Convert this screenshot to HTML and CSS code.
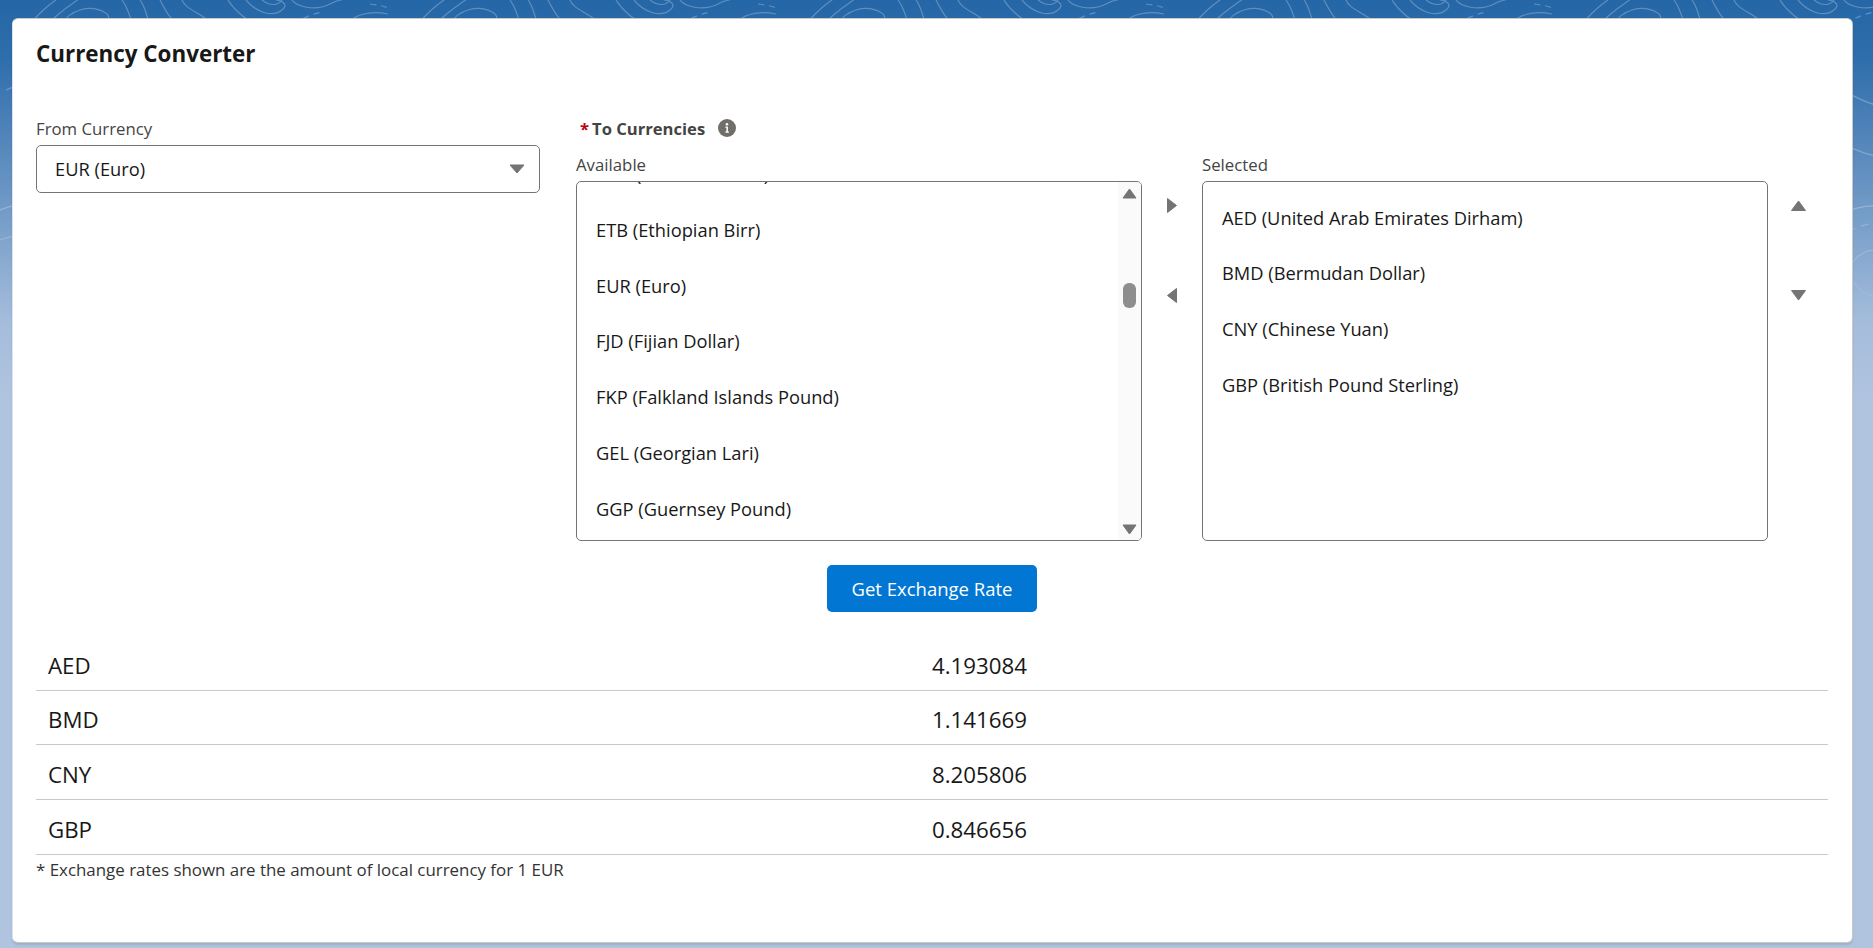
FILE: index.html
```html
<!DOCTYPE html>
<html lang="en">
<head>
  <meta charset="UTF-8">
  <meta name="viewport" content="width=device-width, initial-scale=1.0">
  <title>Currency Converter</title>
  <link rel="stylesheet" href="styles.css">
</head>
<body>
  <svg class="topo" width="1873" height="340" aria-hidden="true">
    <defs>
      <pattern id="topo-tile" width="388" height="340" patternUnits="userSpaceOnUse">
        <g fill="none" stroke="#fff" stroke-width="1.2">
          <path d="M30 24C50 0 70-10 95-20M48 24C66 4 84 0 100-20"/>
          <path d="M62 24C70 10 90 4 104 12C112 16 108 22 104 24"/>
          <path d="M122 0C128 8 130 16 132 24M140 0C146 8 146 16 150 24M160 0C164 8 168 16 176 24"/>
          <path d="M182 0C186 10 200 12 212 24"/>
          <path d="M228 0C234 10 246 20 256 24M246 0C256 12 272 18 282 10C290 4 280 0 276 0M262 0C270 6 278 6 282 0"/>
          <path d="M292 0C296 6 314 12 330 4C338 0 340 0 342 0"/>
          <path d="M294 24C302 18 312 14 322 12M370 4C378 5 384 6 388 8" stroke-dasharray="6 5"/>
          <path d="M348 24C352 16 368 10 388 14M362 24C368 20 378 18 388 20"/>
          <path d="M6 90C50 70 90 110 60 150C40 178 10 160 24 130C34 110 60 120 48 140"/>
          <path d="M120 80C170 60 230 100 220 160C212 210 150 220 130 180C116 150 150 120 176 136"/>
          <path d="M140 100C174 92 204 116 200 156C196 184 160 192 148 170" stroke-dasharray="10 6"/>
          <path d="M270 70C300 110 370 120 388 100M252 110C290 160 360 170 388 150"/>
          <path d="M0 210C50 190 90 220 130 260C160 290 210 280 250 250M0 240C40 224 90 250 120 290"/>
          <path d="M280 220C320 190 380 210 370 260C360 300 320 310 300 280C290 260 320 240 340 256"/>
          <path d="M296 232C326 214 360 226 356 258" stroke-dasharray="8 6"/>
          <path d="M20 300C60 280 100 300 110 340M200 310C240 290 270 310 280 340"/>
        </g>
      </pattern>
    </defs>
    <rect width="1873" height="340" fill="url(#topo-tile)"/>
  </svg>

  <main class="card">
    <h1 class="card-title">Currency Converter</h1>

    <div class="form-row">
      <div class="from-col">
        <label class="field-label" for="from">From Currency</label>
        <div class="select">
          <span id="from">EUR (Euro)</span>
          <svg class="select-caret" width="16" height="10" viewBox="0 0 16 10"><path class="tri" d="M1 1h14L8 9z"/></svg>
        </div>
      </div>

      <div class="to-col">
        <div class="to-label">
          <span class="req">*</span>To Currencies
          <svg class="info" width="18" height="18" viewBox="0 0 18 18">
            <circle cx="9" cy="9" r="9" fill="#706e6b"/>
            <circle cx="9" cy="5.2" r="1.3" fill="#fff"/>
            <path d="M7.4 7.6h2.5v5h1v1.2H7.4v-1.2h1V8.800h-1z" fill="#fff"/>
          </svg>
        </div>
        <div class="dual">
          <div class="dual-col">
            <div class="field-label small">Available</div>
            <div class="listbox">
              <ul class="options options-scrolled">
                <li>ERN (Eritrean Nakfa)</li>
                <li>ETB (Ethiopian Birr)</li>
                <li>EUR (Euro)</li>
                <li>FJD (Fijian Dollar)</li>
                <li>FKP (Falkland Islands Pound)</li>
                <li>GEL (Georgian Lari)</li>
                <li>GGP (Guernsey Pound)</li>
              </ul>
              <div class="scrollbar">
                <svg width="15" height="11" viewBox="0 0 15 11"><path class="tri" d="M7.500 1L14 10H1z"/></svg>
                <div class="scroll-thumb"></div>
                <svg width="15" height="11" viewBox="0 0 15 11"><path class="tri" d="M1 1h13L7.500 10z"/></svg>
              </div>
            </div>
          </div>

          <div class="move-btns">
            <svg width="10" height="15" viewBox="0 0 10 15"><path class="tri" d="M0.500 0.500L9.500 7.500L0.500 14.500z"/></svg>
            <svg width="10" height="15" viewBox="0 0 10 15"><path class="tri" d="M9.500 0.500L0.500 7.500L9.500 14.500z"/></svg>
          </div>

          <div class="dual-col">
            <div class="field-label small">Selected</div>
            <div class="listbox">
              <ul class="options options-selected">
                <li>AED (United Arab Emirates Dirham)</li>
                <li>BMD (Bermudan Dollar)</li>
                <li>CNY (Chinese Yuan)</li>
                <li>GBP (British Pound Sterling)</li>
              </ul>
            </div>
          </div>

          <div class="move-btns move-btns-order">
            <svg width="15" height="11" viewBox="0 0 15 11"><path class="tri" d="M7.500 1L14.500 10.500H0.500z"/></svg>
            <svg width="15" height="11" viewBox="0 0 15 11"><path class="tri" d="M0.500 0.500h14L7.500 10z"/></svg>
          </div>
        </div>
      </div>
    </div>

    <div class="action">
      <button class="btn-brand" type="button">Get Exchange Rate</button>
    </div>

    <div class="rates">
      <div class="rate-row"><span class="rate-code">AED</span><span>4.193084</span></div>
      <div class="rate-row"><span class="rate-code">BMD</span><span>1.141669</span></div>
      <div class="rate-row"><span class="rate-code">CNY</span><span>8.205806</span></div>
      <div class="rate-row"><span class="rate-code">GBP</span><span>0.846656</span></div>
    </div>
    <p class="footnote">* Exchange rates shown are the amount of local currency for 1 EUR</p>
  </main>
</body>
</html>
```

FILE: styles.css
```css
* {
  box-sizing: border-box;
}
html,
body {
  height: 948px;
  margin: 0;
  overflow: hidden;
}
body {
  position: relative;
  padding: 18px 20px 5px 12px;
  background: linear-gradient(#2566a6 0, #2f6eac 60px, #a4bcdb 320px, #b0c4df 400px);
  font-family: "Open Sans", "Noto Sans", sans-serif;
  font-size: 18.300px;
  color: #181818;
}
.topo {
  position: absolute;
  top: 0;
  left: 0;
  opacity: 0.26;
  -webkit-mask-image: linear-gradient(#000 60%, transparent);
  mask-image: linear-gradient(#000 60%, transparent);
}
.card {
  position: relative;
  height: 925px;
  padding: 0 24px 0 23px;
  background: #fff;
  border: 1px solid #c9c9c9;
  border-left-color: #dde3ec;
  border-radius: 6px;
  box-shadow: 0 2px 2px rgba(0, 0, 0, 0.1);
}
.card-title {
  margin: 0;
  padding-top: 19px;
  font-size: 22.400px;
  line-height: 32px;
  font-weight: 700;
}

.form-row {
  display: flex;
  gap: 36px;
  margin-top: 46px;
}
.from-col {
  flex: 0 0 504px;
}
.to-col {
  flex: 1;
  min-width: 0;
}
.field-label {
  display: block;
  height: 29px;
  padding-top: 1px;
  font-size: 16.800px;
  line-height: 24px;
  color: #444;
}
.select {
  display: flex;
  align-items: center;
  justify-content: space-between;
  height: 48px;
  padding: 0 14px 1px 18px;
  border: 1px solid #747474;
  border-radius: 5px;
}
.tri {
  fill: #747474;
  stroke: #747474;
  stroke-width: 1;
  stroke-linejoin: round;
}

.to-label {
  display: flex;
  align-items: center;
  height: 24px;
  margin-bottom: 12px;
  padding-left: 4px;
  font-size: 16.600px;
  font-weight: 700;
  color: #444;
}
.req {
  margin-right: 3px;
  color: #ba0517;
}
.info {
  margin-left: 13px;
}
.dual {
  display: flex;
}
.dual-col {
  flex: 1 1 0;
  min-width: 0;
}
.listbox {
  display: flex;
  height: 360px;
  overflow: hidden;
  border: 1px solid #747474;
  border-radius: 5px;
}
.options {
  flex: 1;
  min-width: 0;
  margin: 0;
  padding: 0 0 0 19px;
  list-style: none;
}
.options li {
  height: 55.800px;
  line-height: 55.800px;
  white-space: nowrap;
}
.options-scrolled {
  margin-top: -36px;
}
.options-selected {
  padding-top: 7.500px;
}
.scrollbar {
  display: flex;
  flex: 0 0 23px;
  flex-direction: column;
  align-items: center;
  padding: 6px 0 5px;
  background: #fafafa;
}
.scrollbar svg {
  display: block;
}
.scroll-thumb {
  width: 13px;
  height: 25px;
  margin: 84px 0 auto;
  background: #8e8e8e;
  border-radius: 6px;
}
.move-btns {
  display: flex;
  flex: 0 0 60px;
  flex-direction: column;
  align-items: center;
  gap: 75px;
  padding-top: 46px;
}
.move-btns-order {
  gap: 79px;
  padding-top: 48px;
}

.action {
  display: flex;
  justify-content: center;
  margin-top: 24px;
}
.btn-brand {
  width: 210px;
  height: 47px;
  padding: 0;
  background: #0176d3;
  border: 0;
  border-radius: 5px;
  font: inherit;
  font-size: 18.500px;
  color: #fff;
}

.rates {
  margin-top: 24px;
}
.rate-row {
  display: grid;
  grid-template-columns: 1fr 1fr;
  align-items: center;
  height: 54.670px;
  padding-top: 5px;
  border-bottom: 1px solid #c9c9c9;
  font-size: 22.300px;
}
.rate-code {
  padding-left: 12px;
}
.footnote {
  margin: 3px 0 0;
  font-size: 16.900px;
  line-height: 24px;
  color: #333;
}
```
